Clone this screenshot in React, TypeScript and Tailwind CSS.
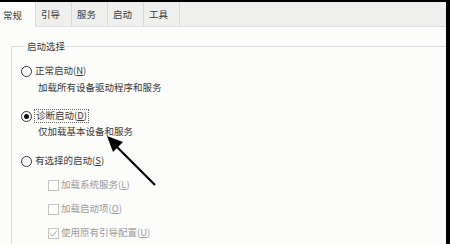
import React from "react";

const font = { fontFamily: '"Noto Sans CJK SC", "Microsoft YaHei", sans-serif' };

function Radio({ checked }: { checked?: boolean }) {
  return (
    <span className="flex h-[11px] w-[11px] shrink-0 items-center justify-center rounded-full border border-[#333] bg-white">
      {checked && <span className="h-[5px] w-[5px] rounded-full bg-[#111]" />}
    </span>
  );
}

function Check({ checked }: { checked?: boolean }) {
  return (
    <span className="flex h-[11px] w-[11px] shrink-0 items-center justify-center border border-[#c4c4c4] bg-[#fcfcfa]">
      {checked && (
        <svg width="9" height="9" viewBox="0 0 9 9">
          <path d="M1 4.5 L3.5 7 L8 1.5" fill="none" stroke="#a8a8a8" strokeWidth="1" />
        </svg>
      )}
    </span>
  );
}

export default function App() {
  const tabs = ["引导", "服务", "启动", "工具"];
  return (
    <div className="relative h-[244px] w-[450px] overflow-hidden bg-black pr-[4px] pt-[2px]" style={font}>
      <div className="flex h-full w-full flex-col bg-[#fcfcfa] text-[9.5px] leading-none text-[#383838]">
        <div className="flex h-[25px] shrink-0 border-b border-[#dedede] bg-[#efefee]">
          <div className="-mb-px flex w-[36px] items-center border-r border-[#d8d8d8] bg-[#fcfcfa] pl-[3px] pt-[2px]">常规</div>
          {tabs.map((t) => (
            <div key={t} className="flex w-[36px] items-center border-r border-[#d8d8d8] pl-[5px] pt-[2px]">
              {t}
            </div>
          ))}
        </div>
        <fieldset className="ml-[11px] mt-[13px] flex-1 border-l border-t border-[#dcdcdc] pl-[9px]">
          <legend className="ml-[4px] px-[2px] text-[9.5px] leading-[12px]">启动选择</legend>
          <div className="mt-[11px] flex flex-col">
            <div className="flex h-[16px] items-center gap-[3px]">
              <Radio />
              <span>正常启动(<span className="underline">N</span>)</span>
            </div>
            <div className="mt-[1px] flex h-[16px] items-center pl-[17px]">加载所有设备驱动程序和服务</div>
            <div className="mt-[12px] flex h-[16px] items-center gap-[2px]">
              <Radio checked />
              <span className="border border-dotted border-[#666] px-px py-[1px]">诊断启动(<span className="underline">D</span>)</span>
            </div>
            <div className="flex h-[16px] items-center pl-[17px]">仅加载基本设备和服务</div>
            <div className="mt-[13px] flex h-[16px] items-center gap-[3px]">
              <Radio />
              <span>有选择的启动(<span className="underline">S</span>)</span>
            </div>
            <div className="mt-[8px] flex h-[16px] items-center gap-[2px] pl-[27px] text-[#9a9a9a]">
              <Check />
              <span>加载系统服务(<span className="underline">L</span>)</span>
            </div>
            <div className="mt-[8px] flex h-[16px] items-center gap-[2px] pl-[27px] text-[#9a9a9a]">
              <Check />
              <span>加载启动项(<span className="underline">O</span>)</span>
            </div>
            <div className="mt-[8px] flex h-[16px] items-center gap-[2px] pl-[27px] text-[#9a9a9a]">
              <Check checked />
              <span>使用原有引导配置(<span className="underline">U</span>)</span>
            </div>
          </div>
        </fieldset>
      </div>
      <svg className="absolute left-0 top-0" width="450" height="244" viewBox="0 0 450 244">
        <line x1="155" y1="185" x2="116" y2="146" stroke="#000" strokeWidth="2.2" />
        <polygon points="107,136 123,142 113,152" fill="#000" />
      </svg>
    </div>
  );
}
